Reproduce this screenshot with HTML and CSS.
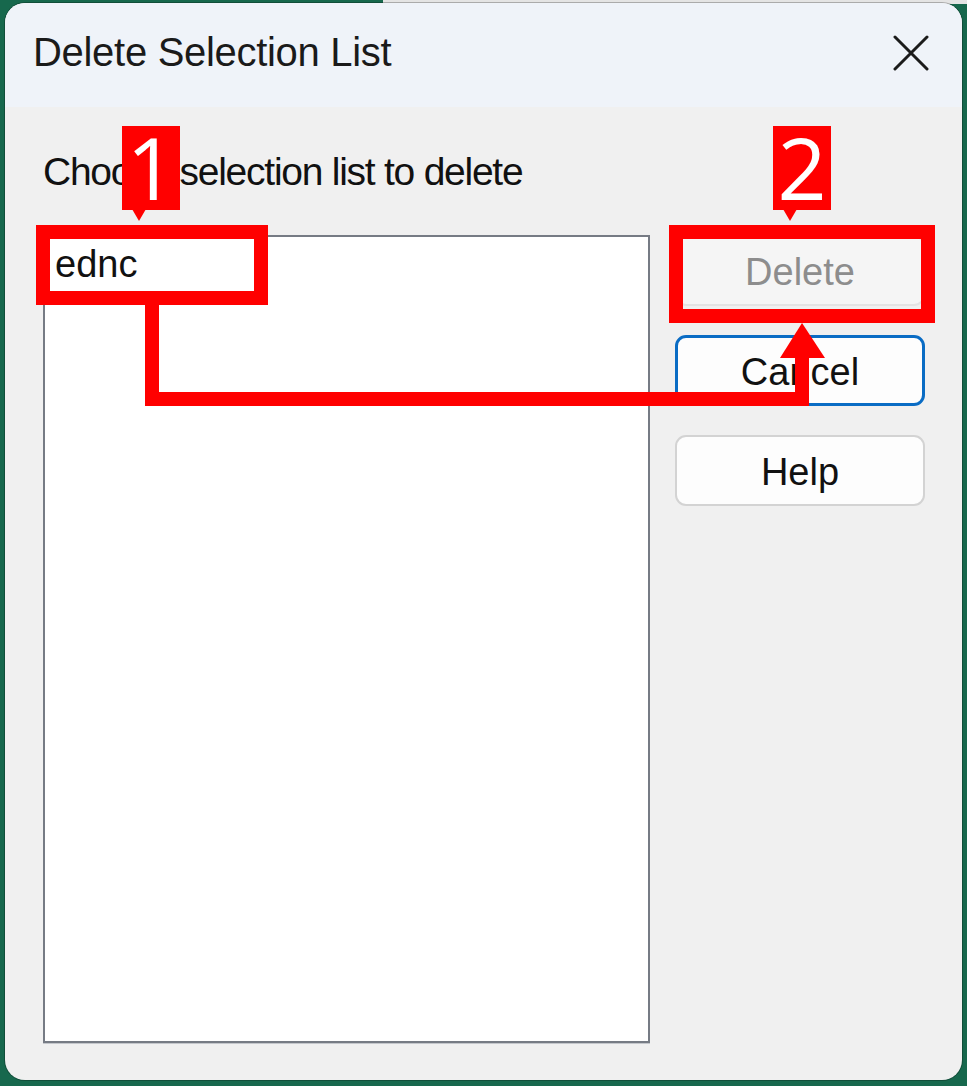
FILE: index.html
```html
<!DOCTYPE html>
<html>
<head>
  <meta charset="UTF-8">
  <title>Delete Selection List</title>
  <link rel="stylesheet" href="styles.css">
</head>
<body>
  <div class="window">
    <div class="titlebar">
      <span class="title">Delete Selection List</span>
      <svg class="close" width="36" height="36" viewBox="0 0 36 36">
        <path d="M2 2 L34 34 M34 2 L2 34" stroke="#1b1b1b" stroke-width="3" stroke-linecap="round" fill="none"/>
      </svg>
    </div>
    <div class="content">
      <p class="label">Choose selection list to delete</p>
      <div class="main">
        <div class="listbox">
          <div class="item">ednc</div>
        </div>
        <div class="buttons">
          <button class="btn" disabled>Delete</button>
          <button class="btn default">Cancel</button>
          <button class="btn">Help</button>
        </div>
      </div>
    </div>
  </div>

  <!-- annotation overlay -->
  <svg class="marks" width="967" height="1086" viewBox="0 0 967 1086">
    <rect x="43" y="232" width="218" height="66" fill="none" stroke="#ff0000" stroke-width="14"/>
    <rect x="676" y="232" width="252" height="84" fill="none" stroke="#ff0000" stroke-width="14"/>
    <path d="M152 305 V399 H802 V356" fill="none" stroke="#ff0000" stroke-width="14"/>
    <polygon points="780,358 825,358 802,323" fill="#ff0000"/>
    <rect x="122" y="126" width="58" height="84" fill="#ff0000"/>
    <polygon points="132,209 146,209 139,221" fill="#ff0000"/>
    <text class="num" x="151" y="200">1</text>
    <rect x="773" y="126" width="58" height="84" fill="#ff0000"/>
    <polygon points="783,209 797,209 790,221" fill="#ff0000"/>
    <text class="num" x="802" y="200">2</text>
  </svg>
</body>
</html>
```

FILE: styles.css
```css
body { margin: 0; height: 1086px; position: relative; overflow: hidden; font-family: "Liberation Sans", Arial, sans-serif; background: linear-gradient(#e4e4e4, #e4e4e4) no-repeat 383px 0 / 584px 4px, #17684d; }
.window { margin: 3px 5px 0 5px; height: 1077px; border-radius: 20px; overflow: hidden; background: #f0f0f0; display: flex; flex-direction: column; box-shadow: 0 0 0 1px rgba(0,0,0,0.25); }
.titlebar { height: 104px; flex: none; background: #eff3f9; display: flex; align-items: center; justify-content: space-between; padding: 0 33px 6px 28px; box-sizing: border-box; }
.title { font-size: 40px; line-height: 48px; color: #1a1a1a; letter-spacing: -0.3px; }
.close { display: block; margin-top: 2px; }
.content { flex: 1; display: flex; flex-direction: column; padding: 42px 37px 37px 38px; }
.label { margin: 0 0 40px; font-size: 39px; line-height: 46px; color: #111; letter-spacing: -1.25px; }
.main { flex: 1; display: flex; gap: 25px; }
.listbox { width: 607px; box-sizing: border-box; background: #fff; border: 2px solid #767b84; box-shadow: 0 1px 0 #c4c7cc; padding: 4px 0 0 10px; }
.item { font-size: 38px; line-height: 46px; color: #111; }
.buttons { width: 250px; display: flex; flex-direction: column; gap: 29px; }
.btn { height: 71px; font-family: "Liberation Sans", Arial, sans-serif; font-size: 38px; color: #111; background: #fdfdfd; border: 2px solid #d3d3d3; border-radius: 11px; padding: 4px 0 0; }
.btn.default { border: 3px solid #0a6cc4; }
.btn:disabled { color: #8d8d8d; background: #f5f5f5; border-color: #e3e3e3; }
.marks { position: absolute; left: 0; top: 0; }
.num { font-family: "Open Sans", sans-serif; font-weight: 400; font-size: 86px; fill: #fff; text-anchor: middle; }
```
